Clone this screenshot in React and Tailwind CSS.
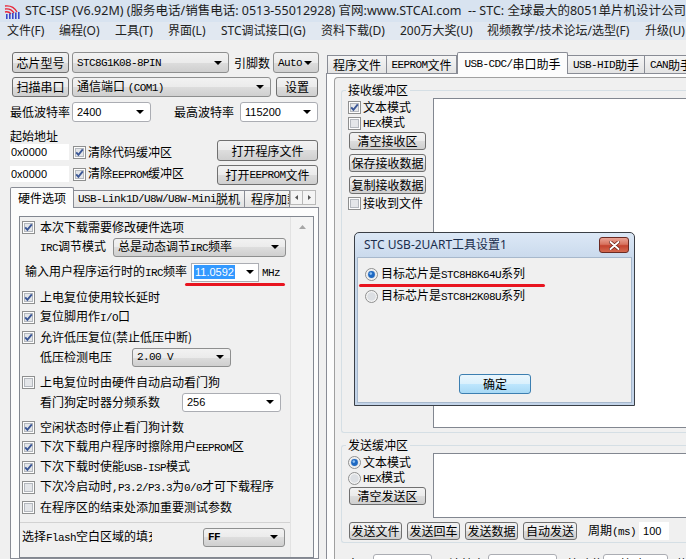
import React from 'react';

const cn = (...a) => a.filter(Boolean).join(' ');

const mono = "font-['Liberation_Mono',monospace] text-[11px] tracking-[-0.6px]";
const num = "font-['Liberation_Sans',sans-serif] text-[11px]";
const btnBg = 'bg-[linear-gradient(#f2f2f2,#ebebeb_50%,#dddddd_50%,#cfcfcf)]';

const M = ({ children }) => <span className={mono}>{children}</span>;

const Arrow = ({ color = '#000' }) => (
    <svg width="8" height="4" viewBox="0 0 8 4" className="shrink-0">
        <path d="M0 0H8L4 4Z" fill={color} />
    </svg>
);

function Check({ on }) {
    return (
        <svg width="13" height="13" viewBox="0 0 13 13" className="shrink-0">
            <rect x="0.5" y="0.5" width="12" height="12" fill="#fdfdfd" stroke="#8e8f8f" />
            <rect x="2.5" y="2.5" width="8" height="8" fill="#e4e6e9" stroke="#b4b8be" />
            {on && <path d="M3.2 6.3 L5.4 8.8 L9.8 3.4" fill="none" stroke="#3b5796" strokeWidth="1.9" />}
        </svg>
    );
}

function Radio({ on }) {
    return (
        <svg width="13" height="13" viewBox="0 0 13 13" className="shrink-0">
            <circle cx="6.5" cy="6.5" r="6" fill="#f4f4f4" stroke="#8e8f8f" />
            <circle cx="6.5" cy="6.5" r="4.3" fill="#dcdfe3" />
            {on && <circle cx="6.5" cy="6.5" r="3.4" fill="#1f69c2" />}
            {on && <circle cx="5.8" cy="5.6" r="1.3" fill="#8cc0f2" />}
        </svg>
    );
}

function Btn({ w, h = 'h-[20px]', className, children }) {
    return (
        <div className={cn('flex items-center justify-center shrink-0 whitespace-nowrap border border-[#707070] rounded-[3px]', btnBg, w, h, className)}>
            {children}
        </div>
    );
}

function Combo({ w, h = 'h-[20px]', white, className, textClass, children }) {
    return (
        <div
            className={cn(
                'flex items-center justify-between shrink-0 overflow-hidden pl-[4px] pr-[6px] border rounded-[3px]',
                white ? 'bg-white border-[#abadb3]' : cn('border-[#8e8f8f]', btnBg),
                w, h, className
            )}
        >
            <span className={cn('whitespace-nowrap', textClass)}>{children}</span>
            <Arrow />
        </div>
    );
}

function CheckRow({ on, className = 'h-[20px] pl-[2px] gap-[5px]', children }) {
    return (
        <div className={cn('flex items-center whitespace-nowrap', className)}>
            <Check on={on} />
            <span>{children}</span>
        </div>
    );
}

function RadioRow({ on, className, children }) {
    return (
        <div className={cn('flex items-center whitespace-nowrap', className)}>
            <Radio on={on} />
            <span>{children}</span>
        </div>
    );
}

function AppIcon() {
    return (
        <svg width="17" height="16" viewBox="0 0 17 16">
            <g fill="none" stroke="#e8283a" strokeWidth="1.4">
                <path d="M1 3 A12 12 0 0 1 13 9" />
                <path d="M1 6 A9 9 0 0 1 10 10" />
                <path d="M1 9 A6 6 0 0 1 7 11" />
            </g>
            <g fill="#3946c8">
                <rect x="2" y="11" width="1.6" height="5" />
                <rect x="5" y="10.5" width="1.6" height="5.5" />
                <rect x="8" y="10" width="1.6" height="6" />
                <rect x="11" y="9.5" width="1.6" height="6.5" />
                <rect x="14" y="9" width="1.6" height="7" />
            </g>
        </svg>
    );
}

function TitleBar() {
    return (
        <div className="h-[22px] flex items-center bg-[#d8e3f0] font-['Noto_Sans','Noto_Sans_CJK_SC',sans-serif]">
            <div className="w-[27px] flex justify-center pl-[1px]">
                <AppIcon />
            </div>
            <span className="text-[12.5px] text-[#1e1e1e] whitespace-pre">
                STC-ISP (V6.92M) (服务电话/销售电话: 0513-55012928) 官网:www.STCAI.com  -- STC: 全球最大的8051单片机设计公司
            </span>
        </div>
    );
}

const menus = [
    ['文件(F)', 'w-[52px]'],
    ['编程(O)', 'w-[56px]'],
    ['工具(T)', 'w-[53px]'],
    ['界面(L)', 'w-[53px]'],
    ['STC调试接口(G)', 'w-[100px]'],
    ['资料下载(D)', 'w-[79px]'],
    ['200万大奖(U)', 'w-[87px]'],
    ['视频教学/技术论坛/选型(F)', 'w-[158px]'],
    ['升级(U)', 'w-[40px]'],
];

function MenuBar() {
    return (
        <div className="h-[18px] flex items-center pl-[7px] bg-[#e1e8f1] text-[#222] whitespace-nowrap font-['Noto_Sans','Noto_Sans_CJK_SC',sans-serif]">
            {menus.map(([label, w]) => (
                <span key={label} className={cn('shrink-0', w)}>{label}</span>
            ))}
        </div>
    );
}

function LeftPane() {
    return (
        <div className="w-[326px] shrink-0 flex flex-col">
            <div className="mt-[12px] h-[21px] flex items-center">
                <Btn w="w-[57px]" h="h-[21px]" className="ml-[12px]">芯片型号</Btn>
                <Combo w="w-[157px]" h="h-[21px]" className="ml-[3px]" textClass={mono}>STC8G1K08-8PIN</Combo>
                <span className="ml-[5px] w-[39px]">引脚数</span>
                <Combo w="w-[46px]" h="h-[21px]" textClass={mono}>Auto</Combo>
            </div>
            <div className="mt-[4px] h-[20px] flex items-center">
                <Btn w="w-[57px]" className="ml-[12px]">扫描串口</Btn>
                <Combo w="w-[199px]" className="ml-[3px]">
                    通信端口 <M>(COM1)</M>
                </Combo>
                <Btn w="w-[42px]" className="ml-[5px]">设置</Btn>
            </div>
            <div className="mt-[5px] h-[20px] flex items-center">
                <span className="ml-[10px] w-[62px]">最低波特率</span>
                <Combo white w="w-[79px]" textClass={num}>2400</Combo>
                <span className="ml-[23px] w-[66px]">最高波特率</span>
                <Combo white w="w-[78px]" textClass={num}>115200</Combo>
            </div>

            <div className="flex">
                <div className="w-[217px] pl-[10px] flex flex-col">
                    <div className="mt-[7px] h-[14px]">起始地址</div>
                    <div className="mt-[1px] h-[16px] flex items-center">
                        <div className={cn('w-[59px] h-[16px] bg-white flex items-center pl-[1px]', num)}>0x0000</div>
                        <div className="ml-[4px] flex items-center gap-[2px] whitespace-nowrap">
                            <Check on />
                            <span>清除代码缓冲区</span>
                        </div>
                    </div>
                    <div className="mt-[6px] h-[16px] flex items-center">
                        <div className={cn('w-[59px] h-[16px] bg-white flex items-center pl-[1px]', num)}>0x0000</div>
                        <div className="ml-[4px] flex items-center gap-[2px] whitespace-nowrap">
                            <Check on />
                            <span>清除<M>EEPROM</M>缓冲区</span>
                        </div>
                    </div>
                </div>
                <div className="flex flex-col">
                    <Btn w="w-[101px]" h="h-[21px]" className="mt-[18px]">打开程序文件</Btn>
                    <Btn w="w-[101px]" className="mt-[4px]">打开<M>EEPROM</M>文件</Btn>
                </div>
            </div>

            <div className="mt-[2px] h-[20px] flex items-end pl-[10px] whitespace-nowrap">
                <div className="relative z-10 w-[64px] h-[21px] -mb-[1px] bg-[#fcfcfc] border border-b-0 border-[#898c95] rounded-t-[2px] flex items-center justify-center">
                    硬件选项
                </div>
                <div className="w-[171px] h-[17px] border border-l-0 border-b-0 border-[#898c95] bg-[linear-gradient(#f5f5f5,#e3e3e3)] flex items-center justify-center">
                    <M>USB-Link1D/U8W/U8W-Mini</M>脱机
                </div>
                <div className="w-[45px] h-[17px] overflow-hidden border border-l-0 border-b-0 border-[#898c95] bg-[linear-gradient(#f5f5f5,#e3e3e3)] flex items-center pl-[6px]">
                    程序加载
                </div>
                <div className="mb-[2px] h-[15px] flex">
                    <div className="w-[13px] h-[15px] border border-[#b8b8b8] bg-[#f4f4f4] flex items-center justify-center">
                        <svg width="3" height="5" viewBox="0 0 3 5"><path d="M3 0V5L0 2.5Z" fill="#555" /></svg>
                    </div>
                    <div className="w-[13px] h-[15px] border border-l-0 border-[#b8b8b8] bg-[#f4f4f4] flex items-center justify-center">
                        <svg width="3" height="5" viewBox="0 0 3 5"><path d="M0 0V5L3 2.5Z" fill="#555" /></svg>
                    </div>
                </div>
            </div>

            <div className="ml-[10px] w-[309px] flex-1 min-h-0 border border-[#898c95] bg-[#fcfcfc] pt-[8px] pl-[8px]">
                <div className="w-[295px] h-full border border-[#828790] bg-[#f0f0f0] flex">
                    <div className="w-[270px] flex flex-col whitespace-nowrap">
                        <CheckRow on>本次下载需要修改硬件选项</CheckRow>
                        <div className="h-[20px] flex items-center pl-[20px]">
                            <span className="w-[73px]"><M>IRC</M>调节模式</span>
                            <Combo w="w-[173px]" h="h-[19px]">总是动态调节<M>IRC</M>频率</Combo>
                        </div>
                        <div className="mt-[5px] h-[20px] flex items-center pl-[5px]">
                            <span className="w-[166px]">输入用户程序运行时的<M>IRC</M>频率</span>
                            <div className="w-[68px] h-[19px] bg-white border border-[#abadb3] flex items-center justify-between pl-[2px] pr-[4px]">
                                <span className={cn('bg-[#3399ff] text-white px-[1px] leading-[14px]', num)}>11.0592</span>
                                <Arrow />
                            </div>
                            <span className="ml-[3px]"><M>MHz</M></span>
                        </div>
                        <CheckRow on className="mt-[5px] h-[20px] pl-[2px] gap-[5px]">上电复位使用较长延时</CheckRow>
                        <CheckRow on>复位脚用作<M>I/O</M>口</CheckRow>
                        <CheckRow on>允许低压复位(禁止低压中断)</CheckRow>
                        <div className="h-[20px] flex items-center pl-[20px]">
                            <span className="w-[92px]">低压检测电压</span>
                            <Combo w="w-[99px]" h="h-[19px]" textClass={mono}>2.00 V</Combo>
                        </div>
                        <CheckRow className="mt-[5px] h-[20px] pl-[2px] gap-[5px]">上电复位时由硬件自动启动看门狗</CheckRow>
                        <div className="h-[20px] flex items-center pl-[20px]">
                            <span className="w-[142px]">看门狗定时器分频系数</span>
                            <Combo white w="w-[99px]" h="h-[19px]" textClass={num}>256</Combo>
                        </div>
                        <CheckRow on className="mt-[5px] h-[20px] pl-[2px] gap-[5px]">空闲状态时停止看门狗计数</CheckRow>
                        <CheckRow on>下次下载用户程序时擦除用户<M>EEPROM</M>区</CheckRow>
                        <CheckRow on>下次下载时使能<M>USB-ISP</M>模式</CheckRow>
                        <CheckRow>下次冷启动时<M>,P3.2/P3.3</M>为<M>0/0</M>才可下载程序</CheckRow>
                        <CheckRow>在程序区的结束处添加重要测试参数</CheckRow>
                        <div className="mt-[5px] h-px bg-[#d2d2d2]" />
                        <div className="mt-[4px] h-[20px] flex items-center pl-[2px]">
                            <span className="w-[181px]">
                                <span className="inline-block w-[130px] overflow-hidden align-bottom">
                                    选择<M>Flash</M>空白区域的填充
                                </span>
                            </span>
                            <Combo w="w-[82px]" h="h-[19px]" textClass={cn(mono, 'font-bold')}>FF</Combo>
                        </div>
                    </div>
                    <div className="flex-1 border-l border-[#e2e2e2] bg-[#f3f3f3] flex justify-center pt-[8px]">
                        <svg width="7" height="4" viewBox="0 0 7 4"><path d="M0 4H7L3.5 0Z" fill="#a6a6a6" /></svg>
                    </div>
                </div>
            </div>
        </div>
    );
}

function Tab({ className, children }) {
    return (
        <div className={cn('h-[18px] shrink-0 border border-b-0 border-[#898c95] bg-[linear-gradient(#f5f5f5,#e3e3e3)] flex items-center justify-center whitespace-nowrap overflow-hidden', className)}>
            {children}
        </div>
    );
}

function Group({ title, className, children }) {
    return (
        <div className={cn('relative border border-r-0 border-[#d5dfe5] rounded-l-[3px]', className)}>
            <span className="absolute left-[4px] top-[-8px] px-[2px] bg-[#f0f0f0] leading-[14px]">{title}</span>
            {children}
        </div>
    );
}

function RightPane() {
    return (
        <div className="flex-1 min-w-0 flex flex-col">
            <div className="mt-[12px] h-[21px] flex items-end">
                <Tab className="ml-[1px] w-[60px]">程序文件</Tab>
                <Tab className="w-[70px] border-l-0"><M>EEPROM</M>文件</Tab>
                <div className="relative z-10 w-[111px] h-[22px] -mb-[1px] shrink-0 bg-[#fcfcfc] border border-b-0 border-[#898c95] rounded-t-[2px] flex items-center justify-center whitespace-nowrap">
                    <M>USB-CDC/</M>串口助手
                </div>
                <Tab className="w-[77px] border-l-0"><M>USB-HID</M>助手</Tab>
                <Tab className="w-[60px] border-l-0 justify-start pl-[5px]"><M>CAN</M>助手</Tab>
            </div>
            <div className="flex-1 min-h-0 border-l border-t border-[#898c95] bg-[#fcfcfc] pl-[7px] pt-[3px] flex flex-col">
                <div className="flex-1 border-l border-t border-[#a0a0a0] rounded-tl-[4px] bg-[#f0f0f0] flex flex-col">
                    <Group title="接收缓冲区" className="ml-[6px] mt-[12px] h-[343px]">
                        <div className="flex">
                            <div className="w-[91px] shrink-0 pl-[6px] pt-[8px] flex flex-col">
                                <CheckRow on className="h-[16px] gap-[2px]">文本模式</CheckRow>
                                <CheckRow className="h-[16px] gap-[2px]"><M>HEX</M>模式</CheckRow>
                                <Btn w="w-[77px]" h="h-[18px]" className="mt-[1px] ml-[1px]">清空接收区</Btn>
                                <Btn w="w-[77px]" h="h-[18px]" className="mt-[4px] ml-[1px]">保存接收数据</Btn>
                                <Btn w="w-[77px]" h="h-[18px]" className="mt-[4px] ml-[1px]">复制接收数据</Btn>
                                <CheckRow className="mt-[1px] h-[16px] gap-[2px]">接收到文件</CheckRow>
                            </div>
                            <div className="mt-[7px] flex-1 h-[330px] bg-white border border-r-0 border-[#828790]" />
                        </div>
                    </Group>
                    <Group title="发送缓冲区" className="ml-[6px] mt-[12px] pb-[2px]">
                        <div className="flex">
                            <div className="w-[91px] shrink-0 pl-[6px] pt-[8px] flex flex-col">
                                <RadioRow on className="h-[16px] gap-[2px]">文本模式</RadioRow>
                                <RadioRow className="h-[16px] gap-[2px]"><M>HEX</M>模式</RadioRow>
                                <Btn w="w-[77px]" h="h-[18px]" className="mt-[1px] ml-[1px]">清空发送区</Btn>
                            </div>
                            <div className="mt-[7px] flex-1 h-[65px] bg-white border border-r-0 border-[#828790]" />
                        </div>
                        <div className="mt-[4px] h-[18px] flex items-center pl-[7px] whitespace-nowrap">
                            <Btn w="w-[53px]" h="h-[18px]">发送文件</Btn>
                            <Btn w="w-[53px]" h="h-[18px]" className="ml-[5px]">发送回车</Btn>
                            <Btn w="w-[53px]" h="h-[18px]" className="ml-[5px]">发送数据</Btn>
                            <Btn w="w-[54px]" h="h-[18px]" className="ml-[5px]">自动发送</Btn>
                            <span className="ml-[11px]">周期<M>(ms)</M></span>
                            <div className={cn('ml-[3px] w-[30px] h-[18px] bg-white flex items-center pl-[4px]', num)}>100</div>
                        </div>
                    </Group>
                    <div className="mt-[11px] h-[20px] flex items-center whitespace-nowrap">
                        <span className="ml-[12px]">串口</span>
                        <Combo white w="w-[59px]" className="ml-[2px]" textClass={mono}>COM1</Combo>
                        <span className="ml-[17px]">波特率</span>
                        <Combo white w="w-[69px]" className="ml-[3px]" textClass={num}>115200</Combo>
                        <span className="ml-[10px]">校验位</span>
                        <Combo white w="w-[65px]">无校验</Combo>
                        <span className="ml-[8px]">停</span>
                    </div>
                </div>
            </div>
        </div>
    );
}

function Dialog() {
    return (
        <div className="absolute left-[354px] top-[232px] w-[281px] h-[174px] border border-[#3a3f46] rounded-t-[5px] bg-[linear-gradient(#dce8f6,#c9d9ec_26px,#c3d4e9)] px-[2px] pb-[2px] flex flex-col">
            <div className="h-[24px] flex items-center justify-between pl-[7px] pr-[3px]">
                <span className="text-[12px] text-[#1b2e4d] whitespace-nowrap font-['Noto_Sans','Noto_Sans_CJK_SC',sans-serif]">
                    STC USB-2UART工具设置1
                </span>
                <div className="w-[30px] h-[16px] rounded-[3px] border border-[#6b2a22] bg-[linear-gradient(#e9a496,#d8735f_45%,#c4432f_55%,#d3694f)] flex items-center justify-center">
                    <svg width="11" height="9" viewBox="0 0 11 9">
                        <path d="M1.5 1 L9.5 8 M9.5 1 L1.5 8" stroke="#6a2118" strokeWidth="3.4" strokeLinecap="round" />
                        <path d="M1.5 1 L9.5 8 M9.5 1 L1.5 8" stroke="#fff" strokeWidth="1.9" strokeLinecap="round" />
                    </svg>
                </div>
            </div>
            <div className="flex-1 border border-[#a7b8cc] bg-[#f0f0f0] flex flex-col">
                <RadioRow on className="mt-[8px] ml-[7px] h-[16px] gap-[3px]">目标芯片是<M>STC8H8K64U</M>系列</RadioRow>
                <RadioRow className="mt-[6px] ml-[7px] h-[16px] gap-[3px]">目标芯片是<M>STC8H2K08U</M>系列</RadioRow>
                <div className="mt-[70px] ml-[101px] w-[72px] h-[20px] rounded-[3px] border border-[#3c7fb1] bg-[linear-gradient(#eaf6fd,#d9f0fc_50%,#bee6fd_50%,#a7d9f5)] flex items-center justify-center">
                    确定
                </div>
            </div>
        </div>
    );
}

export default function App() {
    return (
        <div className="relative w-[686px] h-[559px] overflow-hidden bg-[#f0f0f0] text-black text-[12px] leading-[14px] font-['Noto_Sans_CJK_SC',sans-serif]">
            <TitleBar />
            <MenuBar />
            <div className="flex h-[519px]">
                <LeftPane />
                <RightPane />
            </div>
            <Dialog />
            <div className="absolute left-[185px] top-[283px] w-[100px] h-[3px] rounded-full bg-[#e8141f]" />
            <div className="absolute left-[359px] top-[284px] w-[186px] h-[3px] rounded-full bg-[#e8141f]" />
        </div>
    );
}
